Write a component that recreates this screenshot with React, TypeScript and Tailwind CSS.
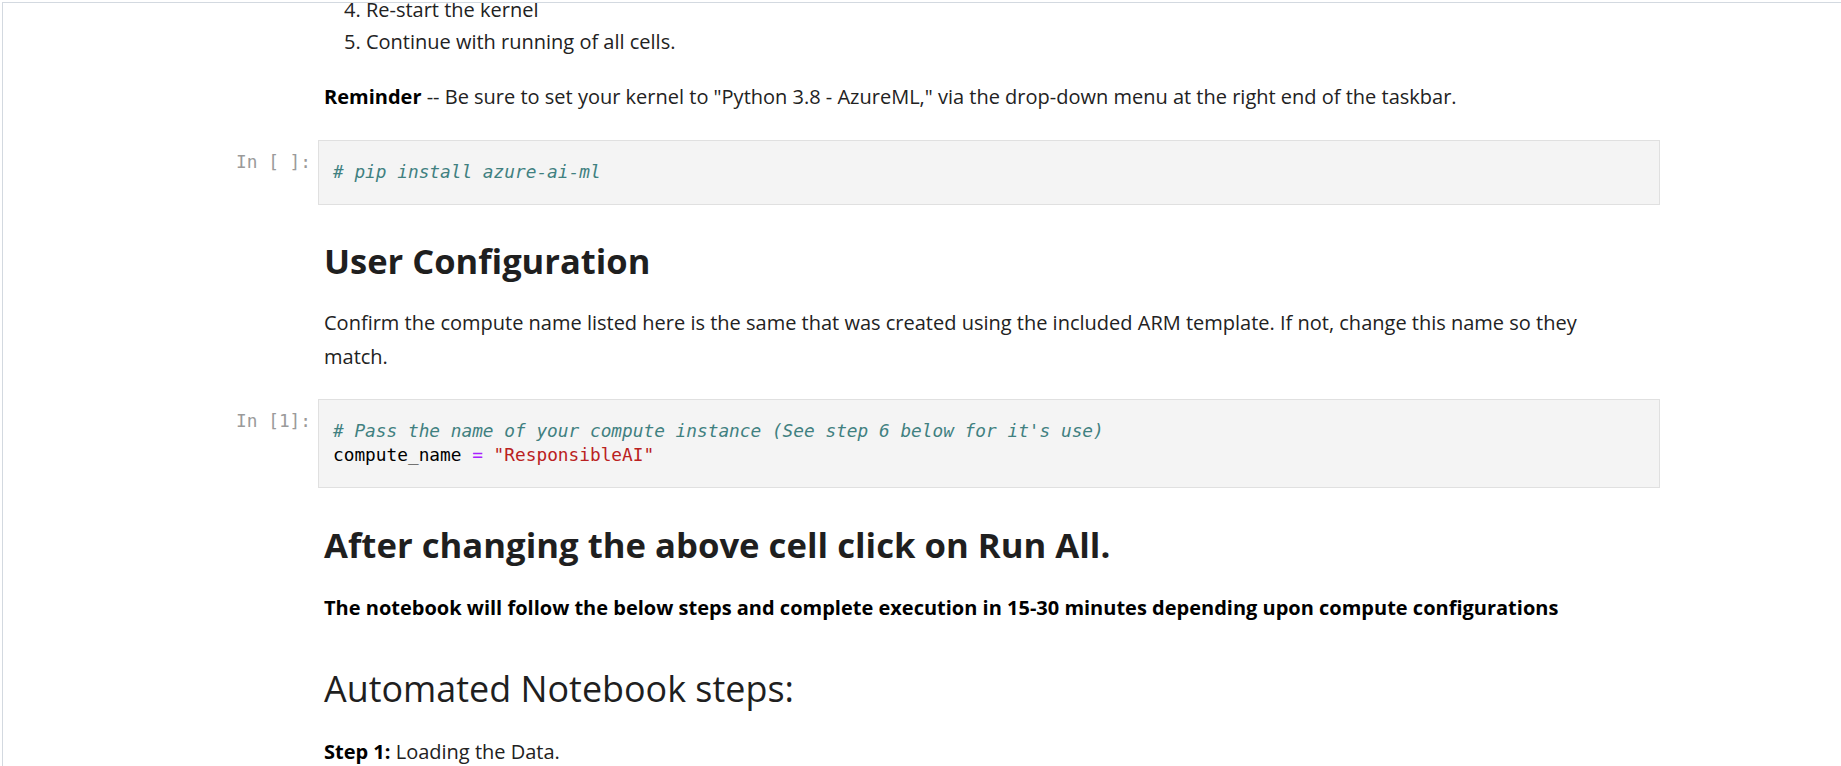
import type { ReactNode } from "react";

const mono = "font-['DejaVu_Sans_Mono',monospace] text-[17.8px] leading-[24px]";

function Prompt({ label }: { label: string }) {
  return (
    <div
      className={`w-[315px] shrink-0 whitespace-pre pr-[7px] pt-[10px] text-right text-[#9a9a9a] ${mono}`}
    >
      {label}
    </div>
  );
}

function CodeCell({ prompt, children }: { prompt: string; children: ReactNode }) {
  return (
    <div className="flex">
      <Prompt label={prompt} />
      <div
        className={`w-[1342px] whitespace-pre border border-[#e0e0e0] bg-[#f4f4f4] pb-[20px] pl-[14px] pt-[19px] text-black ${mono}`}
      >
        {children}
      </div>
    </div>
  );
}

function MarkdownCell({ className, children }: { className: string; children: ReactNode }) {
  return (
    <div className={`flex ${className}`}>
      <div className="w-[315px] shrink-0" />
      <div className="w-[1342px] pl-[6px] pr-[60px]">{children}</div>
    </div>
  );
}

export default function App() {
  return (
    <div className="h-[766px] bg-white pl-[2px] pt-[2px] font-['Open_Sans',sans-serif] text-[20px] text-[#222222]">
      <div className="h-[764px] overflow-hidden border-l border-t border-[#d3d9e0]">
        <MarkdownCell className="-mt-[9px]">
          <ol start={4} className="list-inside list-decimal pl-[20px] leading-[32px]">
            <li>Re-start the kernel</li>
            <li>Continue with running of all cells.</li>
          </ol>
        </MarkdownCell>

        <MarkdownCell className="mt-[22px]">
          <p className="leading-[34px]">
            <strong className="font-bold text-black">Reminder</strong> -- Be sure to set your kernel to
            "Python 3.8 - AzureML," via the drop-down menu at the right end of the taskbar.
          </p>
        </MarkdownCell>

        <div className="mt-[25.5px]">
          <CodeCell prompt="In [ ]:">
            <span className="italic text-[#408080]"># pip install azure-ai-ml</span>
          </CodeCell>
        </div>

        <MarkdownCell className="mt-[35px]">
          <h2 className="text-[34.5px] font-bold leading-[42px] text-[#1f1f1f]">User Configuration</h2>
        </MarkdownCell>

        <MarkdownCell className="mt-[24.5px]">
          <p className="leading-[34px]">
            Confirm the compute name listed here is the same that was created using the included ARM
            template. If not, change this name so they match.
          </p>
        </MarkdownCell>

        <div className="mt-[24.5px]">
          <CodeCell prompt="In [1]:">
            <div className="italic text-[#408080]">
              # Pass the name of your compute instance (See step 6 below for it's use)
            </div>
            <div>
              compute_name <span className="text-[#aa22ff]">=</span>{" "}
              <span className="text-[#ba2121]">"ResponsibleAI"</span>
            </div>
          </CodeCell>
        </div>

        <MarkdownCell className="mt-[36px]">
          <h1 className="text-[34.7px] font-bold leading-[42px] text-[#1f1f1f]">
            After changing the above cell click on Run All.
          </h1>
        </MarkdownCell>

        <MarkdownCell className="mt-[25px]">
          <p className="font-bold leading-[34px] text-black">
            The notebook will follow the below steps and complete execution in 15-30 minutes depending upon
            compute configurations
          </p>
        </MarkdownCell>

        <MarkdownCell className="mt-[43px]">
          <h3 className="text-[35.9px] font-normal leading-[42px] text-[#1f1f1f]">Automated Notebook steps:</h3>
        </MarkdownCell>

        <MarkdownCell className="mt-[25.5px]">
          <p className="leading-[34px]">
            <strong className="font-bold text-black">Step 1:</strong> Loading the Data.
          </p>
        </MarkdownCell>
      </div>
    </div>
  );
}
